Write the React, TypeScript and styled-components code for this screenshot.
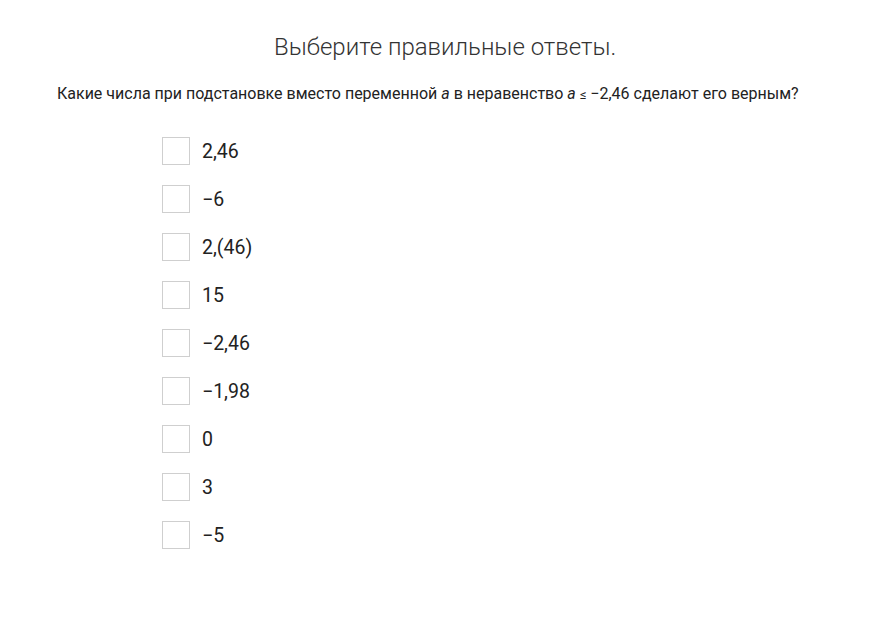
import styled, { createGlobalStyle } from "styled-components";

const GlobalStyle = createGlobalStyle`
  body {
    margin: 0;
    background: #ffffff;
    font-family: Roboto, "Liberation Sans", sans-serif;
    color: #333333;
  }
`;

const options = ["2,46", "\u22126", "2,(46)", "15", "\u22122,46", "\u22121,98", "0", "3", "\u22125"];

const App = (): JSX.Element => {
  return (
    <Page>
      <GlobalStyle />
      <Title>Выберите правильные ответы.</Title>
      <Question>
        Какие числа при подстановке вместо переменной <Var>a</Var> в неравенство{" "}
        <Var>a</Var> <Small>≤</Small> −2,46 сделают его верным?
      </Question>
      <List>
        {options.map((item) => (
          <Option key={item}>
            <Box />
            <Label>{item}</Label>
          </Option>
        ))}
      </List>
    </Page>
  );
};

export default App;

const Page = styled.div`
  width: 894px;
  height: 624px;
  padding: 31px 0 0 57px;
  box-sizing: border-box;
`;

const Title = styled.h1`
  margin: 0 0 0 217px;
  font-size: 24px;
  font-weight: 300;
  line-height: 32px;
  color: #333333;
`;

const Question = styled.p`
  margin: 19px 0 0;
  font-size: 16px;
  line-height: 24px;
  color: #222222;
`;

const Var = styled.i`
  font-style: italic;
`;

const Small = styled.span`
  font-size: 13px;
`;

const List = styled.div`
  display: flex;
  flex-direction: column;
  gap: 20px;
  margin: 30px 0 0 105px;
`;

const Option = styled.label`
  display: flex;
  align-items: center;
  gap: 12px;
  height: 28px;
`;

const Box = styled.span`
  width: 26px;
  height: 26px;
  border: 1px solid #cfcfcf;
  background: #ffffff;
`;

const Label = styled.span`
  font-size: 19.5px;
  color: #222222;
`;
